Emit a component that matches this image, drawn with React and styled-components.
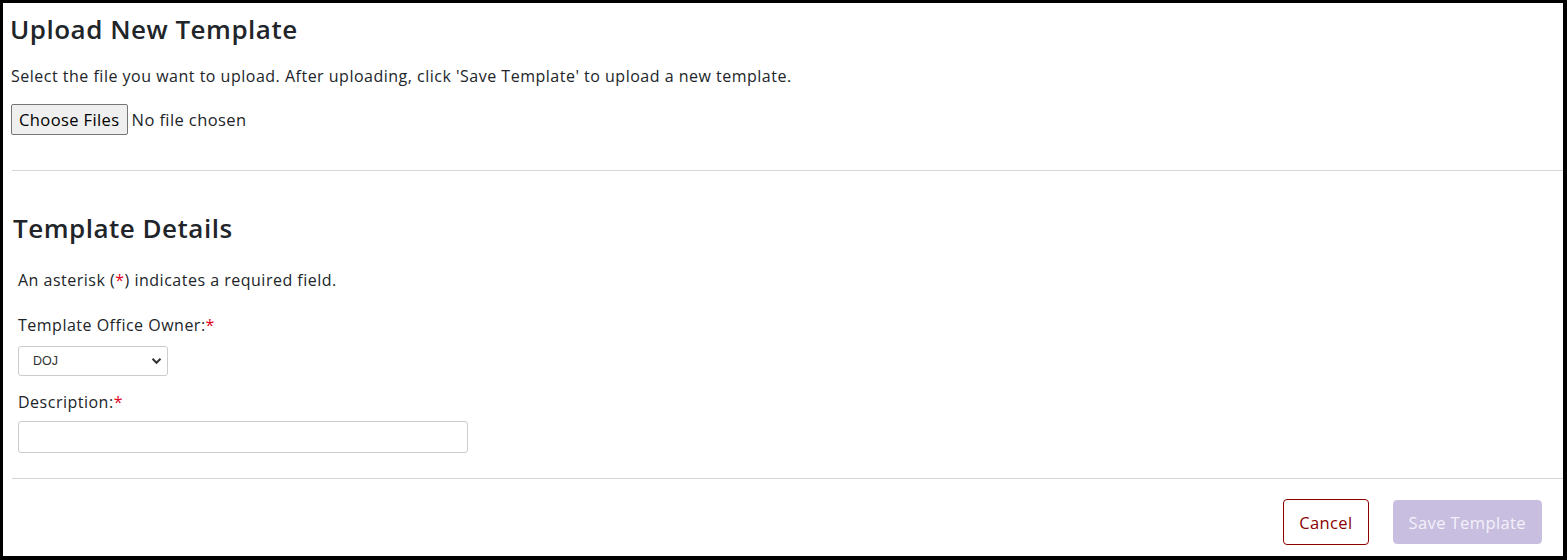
import React from 'react';
import styled, { createGlobalStyle } from 'styled-components';

const GlobalStyle = createGlobalStyle`
  html, body {
    margin: 0;
    padding: 0;
    background: #000;
  }
  body {
    font-family: "Open Sans", "Noto Sans", sans-serif;
    color: #212529;
  }
`;

const Frame = styled.div`
  box-sizing: border-box;
  width: 1567px;
  height: 560px;
  border: 4px solid #000;
  border-top-width: 3px;
  border-left-width: 3px;
  background: #fff;
  display: flex;
  flex-direction: column;
`;

const Section = styled.section`
  padding: ${(p) => p.pad || '0'};
`;

const Title = styled.h2`
  margin: 0;
  font-size: 26px;
  font-weight: 600;
  line-height: 31px;
  letter-spacing: 0.5px;
`;

const Text = styled.p`
  margin: 0;
  font-size: 16px;
  line-height: 22px;
  letter-spacing: 0.5px;
`;

const FileRow = styled.div`
  display: flex;
  align-items: center;
  gap: 4px;
  font-size: 16.5px;
  letter-spacing: 0.4px;
`;

const FileButton = styled.button`
  box-sizing: border-box;
  height: 31px;
  padding: 0 7px;
  font-family: inherit;
  font-size: 16.5px;
  letter-spacing: 0.4px;
  color: #000;
  background: #efefef;
  border: 1px solid #767676;
  border-radius: 2px;
`;

const Divider = styled.hr`
  margin: 0 0 0 9px;
  border: 0;
  border-top: 1px solid #d6d6d6;
`;

const Required = styled.span`
  color: #e0001b;
`;

const Label = styled.label`
  display: block;
  font-size: 16px;
  line-height: 22px;
  letter-spacing: 0.5px;
`;

const Select = styled.div`
  box-sizing: border-box;
  width: 150px;
  height: 30px;
  border: 1px solid #ccc;
  border-radius: 3px;
  display: flex;
  align-items: center;
  justify-content: space-between;
  padding: 0 5px 0 14px;
  font-family: "Liberation Sans", Arial, sans-serif;
  font-size: 12.5px;
  color: #333;
`;

const Input = styled.input`
  box-sizing: border-box;
  display: block;
  width: 450px;
  height: 32px;
  border: 1px solid #ccc;
  border-radius: 3px;
  padding: 0 8px;
  font-family: inherit;
`;

const Footer = styled.div`
  display: flex;
  justify-content: flex-end;
  align-items: center;
  gap: 24px;
  padding: 20px 21px 0 0;
`;

const Button = styled.button`
  box-sizing: border-box;
  height: ${(p) => (p.primary ? '44px' : '46px')};
  padding: 0 15px;
  font-family: inherit;
  font-size: 16.5px;
  letter-spacing: 0.4px;
  border-radius: 4px;
  border: 1px solid ${(p) => (p.primary ? '#c8bfe0' : '#8b0000')};
  background: ${(p) => (p.primary ? '#c8bfe0' : '#fff')};
  color: ${(p) => (p.primary ? '#f4f1fa' : '#8b0000')};
`;

const Chevron = () => (
  <svg width="11" height="8" viewBox="0 0 11 8">
    <path d="M1.5 1.8 L5.5 5.8 L9.5 1.8" fill="none" stroke="#333" strokeWidth="2" />
  </svg>
);

export default function App() {
  return (
    <>
      <GlobalStyle />
      <Frame>
        <Section pad="11px 0 0 7px">
          <Title>Upload New Template</Title>
          <Text style={{ marginTop: 20, marginLeft: 1 }}>
            Select the file you want to upload. After uploading, click 'Save Template' to upload a new template.
          </Text>
          <FileRow style={{ marginTop: 17, marginLeft: 1 }}>
            <FileButton>Choose Files</FileButton>
            <span>No file chosen</span>
          </FileRow>
        </Section>
        <div style={{ marginTop: 35 }}>
          <Divider />
        </div>
        <Section pad="42px 0 0 10px">
          <Title>Template Details</Title>
          <Section pad="25px 0 0 5px">
            <Text>
              An asterisk (<Required>*</Required>) indicates a required field.
            </Text>
            <Label style={{ marginTop: 23 }}>
              Template Office Owner:<Required>*</Required>
            </Label>
            <div style={{ marginTop: 10 }}>
              <Select>
                <span>DOJ</span>
                <Chevron />
              </Select>
            </div>
            <Label style={{ marginTop: 15 }}>
              Description:<Required>*</Required>
            </Label>
            <div style={{ marginTop: 8 }}>
              <Input type="text" />
            </div>
          </Section>
        </Section>
        <div style={{ marginTop: 25 }}>
          <Divider />
        </div>
        <Footer>
          <Button>Cancel</Button>
          <Button primary>Save Template</Button>
        </Footer>
      </Frame>
    </>
  );
}
